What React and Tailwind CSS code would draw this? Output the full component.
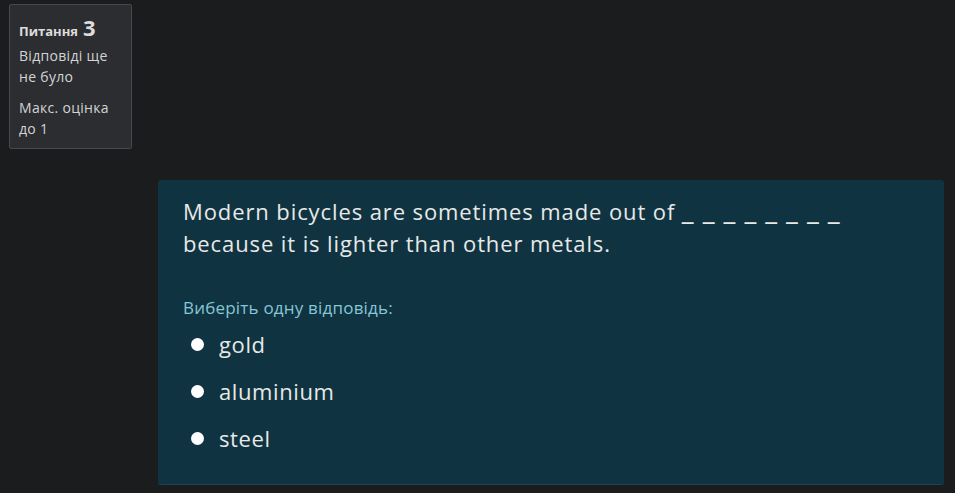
const options = ["gold", "aluminium", "steel"]

export default function App() {
  return (
    <div
      className="min-h-[493px] w-full bg-[#1b1c1e] text-[#e6e6e6] flex"
      style={{ fontFamily: "'Open Sans', 'Noto Sans', sans-serif" }}
    >
      <div className="w-[158px] shrink-0 pt-1 pl-[9px]">
        <div className="w-[123px] h-[145px] bg-[#2b2d30] border border-[#45484c] rounded-[2px] pl-[9px] pr-[12px] pt-[9px]">
          <div className="flex items-baseline gap-[5px] font-bold text-[#dcdcdc]">
            <span className="text-[13px]">Питання</span>
            <span className="text-[22px] leading-[26px]">3</span>
          </div>
          <p className="mt-[3px] text-[14px] leading-[21px] tracking-[0.3px] text-[#d4d4d4]">Відповіді ще не було</p>
          <p className="mt-[10px] text-[14px] leading-[21px] tracking-[0.3px] text-[#d4d4d4]">Макс. оцінка до 1</p>
        </div>
      </div>
      <div className="pt-[180px] pb-[9px]">
        <div className="w-[786px] h-[305px] bg-[#0f3340] rounded-[3px] border-b border-[#1e4450] px-[25px] pt-[15px]">
          <p className="text-[22px] leading-[32px] tracking-[0.9px] text-[#e8e8e8]">
            Modern bicycles are sometimes made out of{" "}
            <span className="text-[27px] leading-[0] tracking-[1px]">_ _ _ _ _ _ _ _</span> because it is lighter than other metals.
          </p>
          <p className="mt-[36px] text-[17px] tracking-[0.2px] text-[#86c6d6]">Виберіть одну відповідь:</p>
          <div className="mt-[10px] flex flex-col gap-[19px]">
            {options.map((o) => (
              <div key={o} className="flex items-center h-[28px]">
                <span className="ml-[8px] w-[13px] h-[13px] rounded-full bg-white shrink-0" />
                <span className="ml-[15px] text-[22px] tracking-[0.6px] text-[#e8e8e8]">{o}</span>
              </div>
            ))}
          </div>
        </div>
      </div>
    </div>
  )
}
